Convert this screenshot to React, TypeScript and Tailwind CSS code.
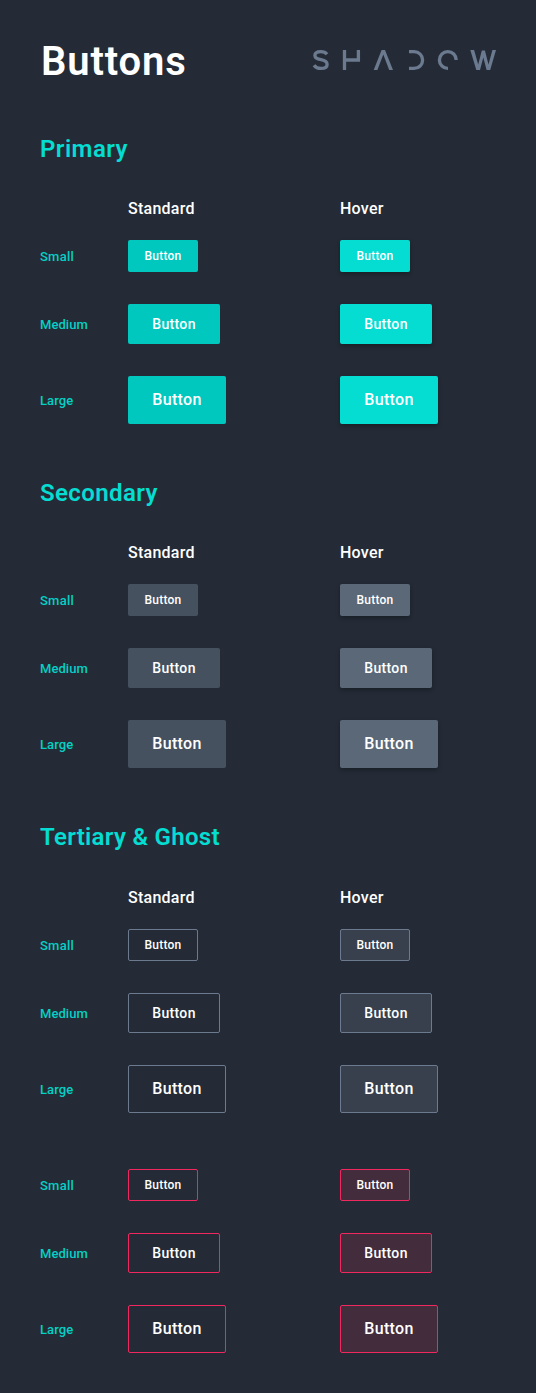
type Size = "small" | "medium" | "large";

const sizes: { size: Size; label: string; labelClass: string }[] = [
  { size: "small", label: "Small", labelClass: "tracking-[0.25px]" },
  { size: "medium", label: "Medium", labelClass: "tracking-[0.05px]" },
  { size: "large", label: "Large", labelClass: "tracking-[0.1px]" },
];

const sizeClass: Record<Size, string> = {
  small: "h-8 w-[70px] text-[12px] tracking-[0.25px]",
  medium: "h-10 w-[92px] text-[14px] tracking-[0.35px]",
  large: "h-12 w-[98px] text-[16px] tracking-[0.35px]",
};

function Button({ size, look }: { size: Size; look: string }) {
  return (
    <button
      className={`flex items-center justify-center rounded-[2px] font-medium text-white ${sizeClass[size]} ${look}`}
    >
      Button
    </button>
  );
}

function Rows({ standard, hover }: { standard: string; hover: string }) {
  return (
    <div className="flex flex-col gap-8">
      {sizes.map(({ size, label, labelClass }) => (
        <div key={size} className="grid grid-cols-[88px_212px_1fr] items-center">
          <span className={`pt-0.5 text-[13px] leading-4 font-medium text-[#05d0c6] ${labelClass}`}>{label}</span>
          <Button size={size} look={standard} />
          <Button size={size} look={hover} />
        </div>
      ))}
    </div>
  );
}

function ColumnHeads() {
  return (
    <div className="grid h-[62px] grid-cols-[88px_212px_1fr] items-center text-[16px] font-medium tracking-[0.25px] text-white">
      <span />
      <span>Standard</span>
      <span>Hover</span>
    </div>
  );
}

function Title({ children, className }: { children: string; className: string }) {
  return (
    <h2 className={`flex h-[58px] items-center text-[24px] font-semibold text-[#05dcd2] ${className}`}>{children}</h2>
  );
}

function Logo() {
  return (
    <svg width="186" height="22" viewBox="310 49 186 22" fill="none" stroke="#6b7a8f" strokeWidth="3.3">
      <path d="M327 54.2C325.6 52.4 323.3 51.6 320.8 51.6C317.4 51.6 314.9 53 314.9 55.5C314.9 58.2 317.4 59 321 59.7C324.7 60.4 327.1 61.6 327.1 64.4C327.1 67 324.5 68.4 321 68.4C318 68.4 315.6 67.4 314 65.2" />
      <path d="M344.5 50V70M344.5 60H360M358.4 50V61.6" />
      <path d="M373.7 70L381.6 50H385L393 70H389.2L383.3 54.6L377.4 70Z" fill="#6b7a8f" stroke="none" />
      <path d="M409 51.7H414C419 51.7 422.6 55.3 422.6 60C422.6 64.8 419 68.4 414 68.4H409" />
      <path d="M448 68.4A8.4 8.4 0 1 1 456.2 60" />
      <path
        d="M470.3 50H474.1L478.2 64.6L481.8 50.6H484.9L488.5 64.6L492.4 50H496L490.2 70H486.6L483.3 57.6L480 70H476.3Z"
        fill="#6b7a8f"
        stroke="none"
      />
    </svg>
  );
}

export default function App() {
  return (
    <main className="h-[1393px] w-[536px] bg-[#242b36] px-10 font-['Roboto',sans-serif]">
      <header className="flex h-[120px] items-center justify-between">
        <h1 className="pt-1 pl-px text-[40px] font-semibold tracking-[0.85px] text-white">Buttons</h1>
        <Logo />
      </header>
      <section className="pb-10">
        <Title className="tracking-[0.45px]">Primary</Title>
        <ColumnHeads />
        <Rows
          standard="bg-[#00c8be]"
          hover="bg-[#05dcd2] shadow-[0_2px_4px_rgba(0,0,0,0.3)]"
        />
      </section>
      <section className="pb-10">
        <Title className="tracking-[0.4px]">Secondary</Title>
        <ColumnHeads />
        <Rows
          standard="bg-[#465160]"
          hover="bg-[#5a6878] shadow-[0_2px_4px_rgba(0,0,0,0.3)]"
        />
      </section>
      <section>
        <Title className="tracking-[0.3px]">Tertiary &amp; Ghost</Title>
        <div className="pt-px">
          <ColumnHeads />
        </div>
        <div className="flex flex-col gap-14">
          <Rows
            standard="border border-[#6b7a8f]"
            hover="border border-[#6b7a8f] bg-[#37404c]"
          />
          <Rows
            standard="border border-[#f0285f]"
            hover="border border-[#f0285f] bg-[#432c3b]"
          />
        </div>
      </section>
    </main>
  );
}
